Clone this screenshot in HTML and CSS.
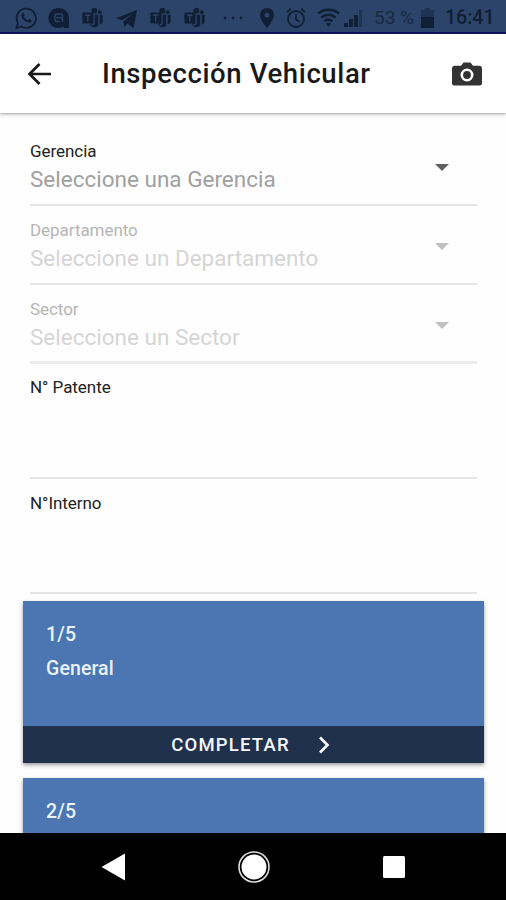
FILE: index.html
```html
<!DOCTYPE html>
<html lang="es">
<head>
<meta charset="utf-8">
<title>Inspección Vehicular</title>
<link rel="stylesheet" href="styles.css">
</head>
<body>
<svg class="defs" width="0" height="0">
  <symbol id="teams" viewBox="0 0 22 24">
    <circle cx="13" cy="4" r="3.2"/><circle cx="19" cy="5.6" r="2.1"/>
    <path d="M8.5 8.5h9v9.2a4.5 4.5 0 0 1-9 0zM18.5 8.5H22v7a3.3 3.3 0 0 1-3.5 3.3z"/>
    <rect y="6" width="11.5" height="12" rx="1"/>
    <path class="cut" d="M3 9h5.6M5.800 9v6.800M12.800 9v7.700c0 1.800-.8 3-3 3M18 8.500V19"/>
  </symbol>
</svg>
<div class="phone">
  <div class="status">
    <div class="notifications">
      <svg width="22" height="24" viewBox="0 0 22 24"><path class="line" d="M1.500 22l1.400-5.200A9.600 9.600 0 1 1 6.500 20.500z"/><path d="M7.200 7.200c1-1 1.600-.5 1.900.4l.6 1.600c.1.500-.8 1.200-.8 1.500.8 1.700 2 2.700 3.700 3.400.6 0 1.100-1.400 1.700-1.200l2.100 1c.9.400.2 2-.6 2.500-2.200 1.300-5.500-.6-7.300-2.600-1.700-1.800-3.100-4.700-1.300-6.600z"/></svg>
      <svg width="22" height="24" viewBox="0 0 22 24"><path d="M11 2a10 10 0 0 1 10 10v10h-4.500l-1.500-1.200A10 10 0 1 1 11 2z"/><path class="cut" d="M14.500 16V9.500c0-1-.5-1.500-1.500-1.500H9a2 2 0 0 0-2 2v3.500a2 2 0 0 0 2 2h2.500M8 11.800h6"/></svg>
      <svg width="23" height="22"><use href="#teams"/></svg>
      <svg width="23" height="24" viewBox="0 0 23 24"><path d="M1 12.300L22 4l-3.500 18-6-4.500-3.400 3.400-.7-5.600L18 7.800 6.600 14.300z"/></svg>
      <svg width="23" height="22"><use href="#teams"/></svg>
      <svg width="23" height="22"><use href="#teams"/></svg>
    </div>
    <svg class="more" width="20" height="4"><circle cx="2" cy="2" r="1.400"/><circle cx="10" cy="2" r="1.400"/><circle cx="18" cy="2" r="1.400"/></svg>
    <svg class="pin" width="14" height="20" viewBox="0 0 14 20"><path fill-rule="evenodd" d="M7 0a7 7 0 0 1 7 7c0 5-7 13-7 13S0 12 0 7a7 7 0 0 1 7-7zm0 4.500a2.500 2.500 0 1 0 0 5 2.500 2.500 0 0 0 0-5z"/></svg>
    <svg class="alarm" width="20" height="22" viewBox="0 0 20 22"><circle class="line" cx="10" cy="12" r="8"/><path class="line" d="M10 7v5.500l3.800 2.200M1 5l4-3.400M19 5l-4-3.400"/></svg>
    <svg class="wifi" width="23" height="19" viewBox="0 0 23 19"><path class="arc" d="M1 5.500c6-5 15-5 21 0M4.300 9.500c4.400-3.500 10-3.500 14.400 0M7.600 13.200c2.500-2 5.300-2 7.800 0"/><path d="M9 15.600q2.500-1.600 5 0L11.500 19z"/></svg>
    <svg class="signal" width="18" height="18"><path d="M0 14h4v4H0zM5 10h4v8H5zM10 6h4v12h-4z"/><path class="faint" d="M15 1h3v17h-3z"/></svg>
    <span class="percent">53 %</span>
    <svg class="battery" width="13" height="20"><path class="faint" d="M4 0h5v2h4v8H0V2h4z"/><path d="M0 9h13v11H0z"/></svg>
    <span class="clock">16:41</span>
  </div>
  <header class="appbar">
    <svg class="back" width="26" height="24" viewBox="0 0 26 24"><path d="M24 12H2.500M12.500 2L2.500 12l10 10"/></svg>
    <h1>Inspección Vehicular</h1>
    <svg class="camera" width="30" height="24" viewBox="0 0 30 24"><path d="M3 3.800h6L11.500.5h7L21 3.800h6a3 3 0 0 1 3 3V21a2.500 2.500 0 0 1-2.500 2.500h-25A2.500 2.500 0 0 1 0 21V6.800a3 3 0 0 1 3-3z"/><circle class="lens" cx="15" cy="13" r="5.200"/></svg>
  </header>
  <main>
    <form class="fields">
      <div class="field select"><label>Gerencia</label><div class="value">Seleccione una Gerencia</div><i class="caret"></i></div>
      <div class="field select disabled"><label>Departamento</label><div class="value">Seleccione un Departamento</div><i class="caret"></i></div>
      <div class="field select disabled last"><label>Sector</label><div class="value">Seleccione un Sector</div><i class="caret"></i></div>
      <div class="field text"><label>N° Patente</label></div>
      <div class="field text"><label>N°Interno</label></div>
    </form>
    <section class="card">
      <div class="body"><div>1/5</div><div>General</div></div>
      <div class="action"><span>COMPLETAR</span><svg width="12" height="18" viewBox="0 0 12 18"><path d="M2 1.500L9.500 9 2 16.500"/></svg></div>
    </section>
    <section class="card">
      <div class="body"><div>2/5</div></div>
    </section>
  </main>
  <nav class="navbar">
    <svg width="26" height="30" viewBox="0 0 26 30"><path d="M25 1.500v27L1.500 15z"/></svg>
    <svg width="34" height="34" viewBox="0 0 34 34"><circle class="ring" cx="17" cy="17" r="15"/><circle cx="17" cy="17" r="12.500"/></svg>
    <svg width="22" height="22"><rect width="22" height="22" rx="1.500"/></svg>
  </nav>
</div>
</body>
</html>
```
FILE: styles.css
```css
* { box-sizing: border-box; }
body { margin: 0; font-family: Roboto, "Liberation Sans", sans-serif; background: #fefefe; }
svg { display: block; flex: none; }
.defs { position: absolute; }
.phone { width: 506px; height: 900px; display: flex; flex-direction: column; overflow: hidden; }

.status { flex: none; height: 34px; display: flex; align-items: center; padding: 3px 0 0 15px; background: #2c4469; border-bottom: 2px solid #10145a; color: #101f35; fill: #101f35; }
.notifications { display: flex; align-items: center; gap: 11px; }
.status .line { fill: none; stroke: #101f35; stroke-width: 1.8; }
.status .arc { fill: none; stroke: #101f35; stroke-width: 2.6; }
.cut { fill: none; stroke: #2c4469; stroke-width: 1.4; }
.faint { fill: #1f3453; }
.more { margin-left: 17px; }
.pin { margin-left: 17px; }
.alarm { margin-left: 12px; }
.wifi { margin-left: 11px; }
.signal { margin-left: 4px; }
.percent { width: 47px; margin-left: 12px; font-size: 19px; color: #182a44; white-space: nowrap; }
.clock { margin-left: 11px; font-size: 19.5px; font-weight: 500; }

.appbar { flex: none; position: relative; z-index: 1; height: 79px; display: flex; align-items: center; padding: 0 24px 0 27px; background: #fff; box-shadow: 0 1px 2px rgba(0,0,0,.25), 0 2px 4px rgba(0,0,0,.12); }
.back { fill: none; stroke: #181818; stroke-width: 2.7; }
h1 { flex: 1; margin: 0 0 0 49px; font-size: 27.5px; line-height: 34px; font-weight: 500; letter-spacing: .62px; color: #191919; white-space: nowrap; }
.camera { fill: #333; }
.lens { fill: #333; stroke: #fff; stroke-width: 2.6; }

main { flex: 1; min-height: 0; overflow: hidden; padding: 14px 22px 0 23px; }
.fields { margin: 0 7px; }
.field { position: relative; height: 79px; padding-top: 14px; border-bottom: 2px solid #e4e4e4; color: #222; }
.field label { display: block; font-size: 17px; line-height: 20px; letter-spacing: -.05px; }
.value { margin-top: 4px; font-size: 22.5px; line-height: 28px; color: #a0a0a0; }
.disabled label { color: #b5b5b5; }
.disabled .value { color: #d5d5d5; }
.last { border-bottom: 3px solid #ececec; }
.caret { position: absolute; right: 28px; top: 37px; border: 7px solid transparent; border-top-color: #606060; border-bottom: 0; }
.disabled .caret { border-top-color: #c0c0c0; }
.text { height: 115px; padding-top: 13px; }
.text + .text { padding-top: 14px; }

.card { margin-top: 7px; background: #4b76b1; color: #eaf2fc; box-shadow: 0 2px 4px rgba(0,0,0,.4); }
.card + .card { margin-top: 15px; }
.body { height: 125px; padding: 17px 23px; font-size: 19.5px; line-height: 34px; font-weight: 500; letter-spacing: .1px; }
.action { height: 37px; display: flex; align-items: center; justify-content: center; gap: 28px; padding-right: 6px; background: #20314d; font-size: 18.5px; font-weight: 500; letter-spacing: 1.2px; color: #f6f8fc; }
.action svg { fill: none; stroke: #f6f8fc; stroke-width: 2.7; }

.navbar { flex: none; height: 67px; display: flex; align-items: center; padding-left: 100px; background: #000; fill: #fff; }
.navbar svg:nth-child(2) { margin-left: 111px; }
.navbar svg:nth-child(3) { margin-left: 112px; }
.ring { fill: none; stroke: #ddd; stroke-width: 1.6; }
```
